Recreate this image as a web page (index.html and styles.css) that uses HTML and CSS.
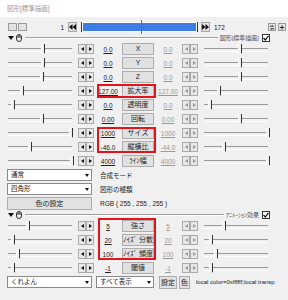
FILE: index.html
```html
<!DOCTYPE html>
<html lang="ja">

<head>
    <meta charset="UTF-8">
    <title>図形[標準描画]</title>
    <link rel="stylesheet" href="styles.css">
</head>

<body>
    <div class="win">
        <div class="title">図形[標準描画]</div>

        <!-- timeline -->
        <div class="timeline">
            <span class="ticon"></span>
            <span class="ticon"></span>
            <span class="frame-no first">1</span>
            <span class="tbtn">
                <svg width="7" height="6" viewBox="0 0 7 6"><path d="M3.5 0 0 3 3.5 6z M7 0 3.5 3 7 6z" fill="#111"/></svg>
            </span>
            <span class="bar"><span class="cursor"></span></span>
            <span class="tbtn next">
                <svg width="7" height="6" viewBox="0 0 7 6"><path d="M0 0 3.5 3 0 6z M3.5 0 7 3 3.5 6z" fill="#111"/></svg>
            </span>
            <span class="frame-no">172</span>
            <span class="ticon small right-start">
                <svg width="7" height="7" viewBox="0 0 7 7"><path d="M1 2h4l-1-1M6 5H2l1 1" stroke="#111" fill="none"/></svg>
            </span>
            <span class="ticon small">
                <svg width="7" height="7" viewBox="0 0 7 7"><path d="M3.5 1v5M1 3.5h5" stroke="#111"/></svg>
            </span>
        </div>

        <div class="group-head">
            <span class="tri"></span>
            <svg class="mouse" width="6" height="8" viewBox="0 0 6 8"><rect x="0.5" y="0.5" width="5" height="7" rx="2.5" fill="none" stroke="#333"/><path d="M3 0.5v2.5M0.5 3h5" stroke="#333" fill="none"/></svg>
            <span class="rule"></span>
            <span class="head-label">図形[標準描画]</span>
            <span class="check"><svg width="6" height="6" viewBox="0 0 6 6"><path d="M0.5 3 2.3 5 5.5 0.8" stroke="#111" stroke-width="1.2" fill="none"/></svg></span>
        </div>

        <div class="params">
            <div class="prow">
                <span class="slider"><span class="thumb" style="left:35px"></span></span>
                <span class="arrows"><i class="arr l"></i><i class="arr r"></i></span>
                <span class="val">0.0</span>
                <span class="pbtn">X</span>
                <span class="val dim">0.0</span>
                <span class="arrows dim"><i class="arr l"></i><i class="arr r"></i></span>
                <span class="slider right"><span class="thumb" style="left:36px"></span></span>
            </div>
            <div class="prow">
                <span class="slider"><span class="thumb" style="left:35px"></span></span>
                <span class="arrows"><i class="arr l"></i><i class="arr r"></i></span>
                <span class="val">0.0</span>
                <span class="pbtn">Y</span>
                <span class="val dim">0.0</span>
                <span class="arrows dim"><i class="arr l"></i><i class="arr r"></i></span>
                <span class="slider right"><span class="thumb" style="left:36px"></span></span>
            </div>
            <div class="prow">
                <span class="slider"><span class="thumb" style="left:34px"></span></span>
                <span class="arrows"><i class="arr l"></i><i class="arr r"></i></span>
                <span class="val">0.0</span>
                <span class="pbtn">Z</span>
                <span class="val dim">0.0</span>
                <span class="arrows dim"><i class="arr l"></i><i class="arr r"></i></span>
                <span class="slider right"><span class="thumb" style="left:36px"></span></span>
            </div>
            <div class="prow">
                <span class="slider"><span class="thumb" style="left:14px"></span></span>
                <span class="arrows"><i class="arr l"></i><i class="arr r"></i></span>
                <span class="val">127.00</span>
                <span class="pbtn">拡大率</span>
                <span class="val dim">127.00</span>
                <span class="arrows dim"><i class="arr l"></i><i class="arr r"></i></span>
                <span class="slider right"><span class="thumb" style="left:15px"></span></span>
            </div>
            <div class="prow">
                <span class="slider"><span class="thumb" style="left:5px"></span></span>
                <span class="arrows"><i class="arr l"></i><i class="arr r"></i></span>
                <span class="val">0.0</span>
                <span class="pbtn">透明度</span>
                <span class="val dim">0.0</span>
                <span class="arrows dim"><i class="arr l"></i><i class="arr r"></i></span>
                <span class="slider right"><span class="thumb" style="left:6px"></span></span>
            </div>
            <div class="prow">
                <span class="slider"><span class="thumb" style="left:34px"></span></span>
                <span class="arrows"><i class="arr l"></i><i class="arr r"></i></span>
                <span class="val">0.00</span>
                <span class="pbtn">回転</span>
                <span class="val dim">0.00</span>
                <span class="arrows dim"><i class="arr l"></i><i class="arr r"></i></span>
                <span class="slider right"><span class="thumb" style="left:36px"></span></span>
            </div>
            <div class="prow">
                <span class="slider"><span class="thumb" style="left:63px"></span></span>
                <span class="arrows"><i class="arr l"></i><i class="arr r"></i></span>
                <span class="val">1000</span>
                <span class="pbtn">サイズ</span>
                <span class="val dim">1000</span>
                <span class="arrows dim"><i class="arr l"></i><i class="arr r"></i></span>
                <span class="slider right"><span class="thumb" style="left:64px"></span></span>
            </div>
            <div class="prow">
                <span class="slider"><span class="thumb" style="left:22px"></span></span>
                <span class="arrows"><i class="arr l"></i><i class="arr r"></i></span>
                <span class="val">-46.0</span>
                <span class="pbtn">縦横比</span>
                <span class="val dim">-44.0</span>
                <span class="arrows dim"><i class="arr l"></i><i class="arr r"></i></span>
                <span class="slider right"><span class="thumb" style="left:20px"></span></span>
            </div>
            <div class="prow">
                <span class="slider"><span class="thumb" style="left:64px"></span></span>
                <span class="arrows"><i class="arr l"></i><i class="arr r"></i></span>
                <span class="val">4000</span>
                <span class="pbtn">ﾗｲﾝ幅</span>
                <span class="val dim">4000</span>
                <span class="arrows dim"><i class="arr l"></i><i class="arr r"></i></span>
                <span class="slider right"><span class="thumb" style="left:64px"></span></span>
            </div>
        </div>

        <div class="settings">
            <div class="srow">
                <span class="sel">通常</span>
                <span class="slabel">合成モード</span>
            </div>
            <div class="srow">
                <span class="sel">四角形</span>
                <span class="slabel">図形の種類</span>
            </div>
            <div class="srow">
                <span class="sbtn">色の設定</span>
                <span class="slabel">RGB ( 255 , 255 , 255 )</span>
            </div>
        </div>

        <div class="group-head">
            <span class="tri"></span>
            <svg class="mouse" width="6" height="8" viewBox="0 0 6 8"><rect x="0.5" y="0.5" width="5" height="7" rx="2.5" fill="none" stroke="#333"/><path d="M3 0.5v2.5M0.5 3h5" stroke="#333" fill="none"/></svg>
            <span class="rule"></span>
            <span class="head-label">ｱﾆﾒｰｼｮﾝ効果</span>
            <span class="check"><svg width="6" height="6" viewBox="0 0 6 6"><path d="M0.5 3 2.3 5 5.5 0.8" stroke="#111" stroke-width="1.2" fill="none"/></svg></span>
        </div>

        <div class="params">
            <div class="prow">
                <span class="slider"><span class="thumb" style="left:20px"></span></span>
                <span class="arrows"><i class="arr l"></i><i class="arr r"></i></span>
                <span class="val">5</span>
                <span class="pbtn">強さ</span>
                <span class="val dim">5</span>
                <span class="arrows dim"><i class="arr l"></i><i class="arr r"></i></span>
                <span class="slider right"><span class="thumb" style="left:20px"></span></span>
            </div>
            <div class="prow">
                <span class="slider"><span class="thumb" style="left:5px"></span></span>
                <span class="arrows"><i class="arr l"></i><i class="arr r"></i></span>
                <span class="val">20</span>
                <span class="pbtn">ﾉｲｽﾞ 分散</span>
                <span class="val dim">20</span>
                <span class="arrows dim"><i class="arr l"></i><i class="arr r"></i></span>
                <span class="slider right"><span class="thumb" style="left:7px"></span></span>
            </div>
            <div class="prow">
                <span class="slider"><span class="thumb" style="left:10px"></span></span>
                <span class="arrows"><i class="arr l"></i><i class="arr r"></i></span>
                <span class="val">100</span>
                <span class="pbtn">ﾉｲｽﾞ 頻度</span>
                <span class="val dim">100</span>
                <span class="arrows dim"><i class="arr l"></i><i class="arr r"></i></span>
                <span class="slider right"><span class="thumb" style="left:12px"></span></span>
            </div>
            <div class="prow">
                <span class="slider"><span class="thumb" style="left:5px"></span></span>
                <span class="arrows"><i class="arr l"></i><i class="arr r"></i></span>
                <span class="val">-1</span>
                <span class="pbtn">閾値</span>
                <span class="val dim">-1</span>
                <span class="arrows dim"><i class="arr l"></i><i class="arr r"></i></span>
                <span class="slider right"><span class="thumb" style="left:7px"></span></span>
            </div>
        </div>

        <div class="footer">
            <span class="sel">くれよん</span>
            <span class="sel narrow">すべて表示</span>
            <span class="sbtn small">設定</span>
            <span class="sbtn tiny">色</span>
            <span class="code">local color=0xffffff;local transp</span>
        </div>

        <!-- annotation boxes drawn over the dialog -->
        <div class="mark m1"></div>
        <div class="mark m2"></div>
        <div class="mark m3"></div>
    </div>
</body>

</html>
```

FILE: styles.css
```css
* {
    box-sizing: border-box;
}

body {
    margin: 0;
    width: 288px;
    height: 300px;
    overflow: hidden;
    background-color: #f0f0f0;
    font-family: "Liberation Sans", "Noto Sans CJK JP", sans-serif;
    font-size: 6.5px;
    color: #222;
}

.win {
    position: relative;
    width: 288px;
    height: 300px;
    background-color: #f0f0f0;
}

.title {
    height: 17px;
    line-height: 17px;
    padding-left: 7px;
    background-color: #fff;
    color: #9a9a9a;
}

/* timeline */
.timeline {
    display: flex;
    align-items: center;
    height: 12px;
    margin-top: 4px;
    padding-left: 8px;
}

.ticon {
    width: 9px;
    height: 8px;
    margin-right: 1px;
    border: 1px solid #9a9a9a;
    background-color: #e4e4e4;
    display: flex;
    align-items: center;
    justify-content: center;
}

.ticon.small {
    width: 8px;
    margin-right: 2px;
}

.right-start {
    margin-left: auto;
}

.frame-no {
    padding: 0 4px;
}

.frame-no.first {
    width: 40px;
    text-align: right;
}

.tbtn {
    width: 9px;
    height: 10px;
    border: 1px solid #a5a5a5;
    background-color: #e6e6e6;
    display: flex;
    align-items: center;
    justify-content: center;
}

.tbtn.next {
    margin-left: 4px;
}

.bar {
    position: relative;
    width: 115px;
    height: 10px;
    margin-left: 5px;
    background-color: #3b7de0;
    border: 1px solid #fff;
    box-shadow: -1px 0 0 #333, 1px 0 0 #333;
}

.cursor {
    position: absolute;
    left: 58px;
    top: -3px;
    width: 1px;
    height: 14px;
    background-color: #e33;
}

/* group header */
.group-head {
    display: flex;
    align-items: center;
    height: 9px;
    padding-left: 8px;
}

.tri {
    width: 0;
    height: 0;
    border-left: 3px solid transparent;
    border-right: 3px solid transparent;
    border-top: 4px solid #111;
}

.mouse {
    margin-left: 2px;
}

.rule {
    flex: 1;
    height: 2px;
    margin: 0 2px 0 3px;
    border-top: 1px solid #a0a0a0;
    border-bottom: 1px solid #fff;
}

.head-label {
    color: #555;
    font-size: 6px;
}

.check {
    width: 8px;
    height: 8px;
    margin: 0 18px 0 3px;
    border: 1px solid #333;
    background-color: #fff;
    display: flex;
    align-items: center;
    justify-content: center;
}

/* parameter rows */
.prow {
    display: flex;
    align-items: center;
    height: 14px;
    padding-left: 6px;
}

.slider {
    position: relative;
    flex: none;
    width: 68px;
    height: 12px;
}

.slider::before {
    content: "";
    position: absolute;
    left: 2px;
    right: 2px;
    top: 5px;
    height: 2px;
    border-top: 1px solid #9a9a9a;
    border-bottom: 1px solid #fff;
}

.slider.right {
    margin-left: 4px;
}

.thumb {
    position: absolute;
    top: 1px;
    width: 4px;
    height: 11px;
    background-color: #f0f0f0;
    border-left: 1px solid #fff;
    border-right: 1px solid #333;
    clip-path: polygon(0 0, 100% 0, 100% 80%, 50% 100%, 0 80%);
}

.arrows {
    display: flex;
    flex: none;
    width: 16px;
    height: 10px;
    margin-left: 4px;
}

.arrows.dim {
    margin-left: 0;
}

.arr {
    width: 8px;
    height: 10px;
    border: 1px solid #aaa;
    background-color: #e8e8e8;
    display: flex;
    align-items: center;
    justify-content: center;
}

.arr::before {
    content: "";
    border-top: 2.5px solid transparent;
    border-bottom: 2.5px solid transparent;
}

.arr.l::before {
    border-right: 3px solid #111;
}

.arr.r::before {
    border-left: 3px solid #111;
}

.arrows.dim .arr.l::before {
    border-right-color: #9a9a9a;
}

.arrows.dim .arr.r::before {
    border-left-color: #9a9a9a;
}

.val {
    flex: none;
    width: 28px;
    text-align: center;
    text-decoration: underline;
    color: #222;
}

.val.dim {
    color: #9a9a9a;
}

.pbtn {
    flex: none;
    width: 32px;
    height: 12px;
    border: 1px solid #adadad;
    background-color: #e1e1e1;
    font-size: 7px;
    line-height: 10px;
    text-align: center;
    white-space: nowrap;
}

/* settings rows */
.srow {
    display: flex;
    align-items: center;
    height: 14px;
    padding-left: 7px;
}

.sel {
    position: relative;
    flex: none;
    width: 85px;
    height: 12px;
    padding-left: 3px;
    line-height: 10px;
    background-color: #fff;
    border: 1px solid #8a8a8a;
}

.sel::after {
    content: "";
    position: absolute;
    right: 2px;
    top: 4px;
    border-left: 2px solid transparent;
    border-right: 2px solid transparent;
    border-top: 3px solid #111;
}

.sbtn {
    flex: none;
    width: 85px;
    height: 13px;
    border: 1px solid #adadad;
    background-color: #e1e1e1;
    line-height: 11px;
    text-align: center;
    font-size: 7px;
}

.slabel {
    margin-left: 8px;
}

/* footer */
.footer {
    display: flex;
    align-items: center;
    height: 14px;
    padding-left: 7px;
    white-space: nowrap;
    overflow: hidden;
}

.sel.narrow {
    width: 58px;
    margin-left: 4px;
}

.sbtn.small {
    width: 18px;
    margin-left: 5px;
}

.sbtn.tiny {
    width: 11px;
    margin-left: 2px;
}

.code {
    margin-left: 6px;
    font-size: 6px;
}

/* red annotation boxes */
.mark {
    position: absolute;
    border: 2px solid #e5141b;
}

.m1 {
    left: 97px;
    top: 84px;
    width: 59px;
    height: 14px;
}

.m2 {
    left: 97px;
    top: 127px;
    width: 59px;
    height: 26px;
}

.m3 {
    left: 98px;
    top: 218px;
    width: 58px;
    height: 42px;
}
```
